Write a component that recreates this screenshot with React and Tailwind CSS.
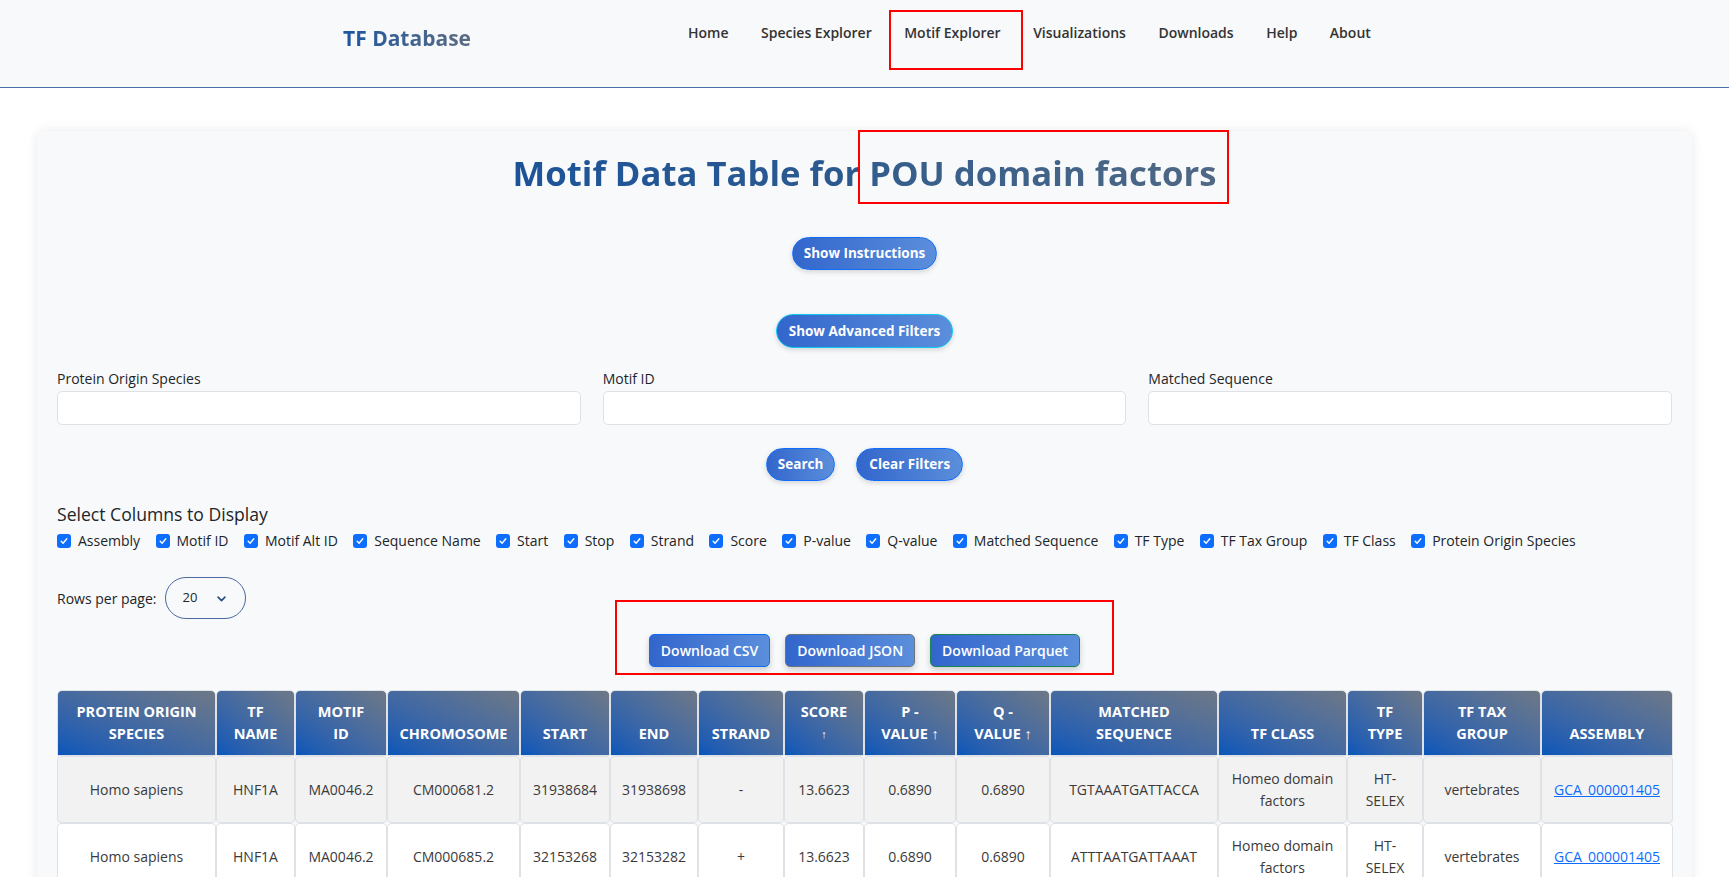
const navLinks = ["Home", "Species Explorer", "Motif Explorer", "Visualizations", "Downloads", "Help", "About"];

const columnsToShow = [
  "Assembly",
  "Motif ID",
  "Motif Alt ID",
  "Sequence Name",
  "Start",
  "Stop",
  "Strand",
  "Score",
  "P-value",
  "Q-value",
  "Matched Sequence",
  "TF Type",
  "TF Tax Group",
  "TF Class",
  "Protein Origin Species",
];

const headers = [
  { w: "w-[159px]", lines: ["Protein Origin", "Species"] },
  { w: "w-[79px]", lines: ["TF", "Name"] },
  { w: "w-[92px]", lines: ["Motif", "ID"] },
  { w: "w-[133px]", lines: ["Chromosome"] },
  { w: "w-[90px]", lines: ["Start"] },
  { w: "w-[88px]", lines: ["End"] },
  { w: "w-[86px]", lines: ["Strand"] },
  { w: "w-[80px]", lines: ["Score", "↑"] },
  { w: "w-[92px]", lines: ["P -", "Value ↑"] },
  { w: "w-[94px]", lines: ["Q -", "Value ↑"] },
  { w: "w-[168px]", lines: ["Matched", "Sequence"] },
  { w: "w-[129px]", lines: ["TF Class"] },
  { w: "w-[76px]", lines: ["TF", "Type"] },
  { w: "w-[118px]", lines: ["TF Tax", "Group"] },
  { w: "w-[132px]", lines: ["Assembly"] },
];

const rows = [
  ["Homo sapiens", "HNF1A", "MA0046.2", "CM000681.2", "31938684", "31938698", "-", "13.6623", "0.6890", "0.6890", "TGTAAATGATTACCA"],
  ["Homo sapiens", "HNF1A", "MA0046.2", "CM000685.2", "32153268", "32153282", "+", "13.6623", "0.6890", "0.6890", "ATTTAATGATTAAAT"],
  ["Homo sapiens", "HNF1A", "MA0046.2", "CM000668.2", "45210917", "45210931", "+", "13.6623", "0.6890", "0.6890", "GTTAAATGATTAACA"],
];

const Checkbox = () => (
  <span className="flex h-[14px] w-[14px] items-center justify-center rounded-[3px] bg-[#0d6efd]">
    <svg viewBox="0 0 16 16" className="h-[10px] w-[10px]" fill="none">
      <path d="M3.5 8.5l3 3 6-7" stroke="white" strokeWidth="2.2" strokeLinecap="round" strokeLinejoin="round" />
    </svg>
  </span>
);

const pill =
  "rounded-full bg-gradient-to-r from-[#3366cc] to-[#5b8edb] text-[13.5px] font-bold text-white shadow-[0_2px_5px_rgba(0,0,0,0.15)]";

const dl =
  "h-[33px] rounded-[5px] bg-gradient-to-r from-[#3366cc] to-[#5b8edb] px-[11px] text-[14px] font-semibold text-white shadow-[0_3px_6px_rgba(0,0,0,0.18)]";

const cell = "rounded-[4px] border border-[#dee2e6] px-[6px] py-[10.5px] text-center align-middle text-[14px] leading-[22px] text-[#3a3a3a]";

export default function App() {
  return (
    <div className="min-h-screen bg-white font-['Open_Sans',sans-serif] text-[#212529]">
      <header className="h-[88px] border-b border-[#4a6fa5] bg-[#f8f9fa]">
        <div className="flex pl-[343px]">
          <div className="w-[345px] pt-[24px]">
            <span className="bg-gradient-to-r from-[#1a56a0] to-[#5b6b80] bg-clip-text text-[21px] font-bold leading-[28px] text-transparent">
              TF Database
            </span>
          </div>
          <nav className="flex gap-[32.5px] pt-[23px]">
            {navLinks.map((l) => (
              <span key={l} className="relative text-[14px] font-semibold leading-[20px] text-[#333]">
                {l}
                {l === "Motif Explorer" && (
                  <span className="absolute -bottom-[18px] -left-[15px] -right-[22px] -top-[13px] border-2 border-[#ff0000]" />
                )}
              </span>
            ))}
          </nav>
        </div>
      </header>

      <main className="px-[37px] pt-[43px]">
        <section className="rounded-lg bg-[#f8f9fa] px-5 pb-10 pt-[18px] shadow-[0_0_12px_rgba(0,0,0,0.09)]">
          <h1 className="text-center text-[34.7px] font-bold leading-[48px]">
            <span className="bg-gradient-to-r from-[#1c5398] to-[#2d5a8e] bg-clip-text text-transparent">Motif Data Table for </span>
            <span className="relative">
              <span className="bg-gradient-to-r from-[#335d8c] to-[#4f6884] bg-clip-text text-transparent">POU domain factors</span>
              <span className="absolute -bottom-[8px] -left-[11px] -right-[13px] -top-[19px] border-2 border-[#ff0000]" />
            </span>
          </h1>

          <div className="mt-[40px] flex justify-center">
            <button className={`${pill} h-[33px] border border-[#0d6efd] px-[11px]`}>Show Instructions</button>
          </div>
          <div className="mt-[44px] flex justify-center">
            <button className={`${pill} h-[34px] border border-[#0dcaf0] px-[12px]`}>Show Advanced Filters</button>
          </div>

          <div className="mt-[21px] grid grid-cols-3 gap-[22px]">
            {["Protein Origin Species", "Motif ID", "Matched Sequence"].map((f) => (
              <label key={f} className="flex flex-col">
                <span className="mb-[2px] text-[14px] leading-[20px] text-[#212529]">{f}</span>
                <input className="h-[34px] rounded-[5px] border border-[#dee2e6] bg-white px-3 text-[14px]" />
              </label>
            ))}
          </div>

          <div className="mt-[23px] flex justify-center gap-[21px]">
            <button className={`${pill} h-[33px] border border-[#0d6efd] px-[11px]`}>Search</button>
            <button className={`${pill} h-[33px] border border-[#0d6efd] px-[12px]`}>Clear Filters</button>
          </div>

          <h2 className="mt-[21px] text-[17.6px] font-medium leading-[24px] text-[#212529]">Select Columns to Display</h2>
          <div className="mt-[5px] flex flex-wrap">
            {columnsToShow.map((c) => (
              <span key={c} className="mr-[15.4px] flex items-center gap-[7px] text-[14px] leading-[20px]">
                <Checkbox />
                {c}
              </span>
            ))}
          </div>

          <div className="mt-[26px] flex items-center gap-[8px]">
            <span className="text-[14px]">Rows per page:</span>
            <div className="flex h-[42px] w-[81px] items-center justify-between rounded-full border border-[#4a6aa0] pl-[17px] pr-[18px]">
              <span className="text-[13px]">20</span>
              <svg viewBox="0 0 16 16" className="h-[11px] w-[11px]" fill="none">
                <path d="M3 6l5 5 5-5" stroke="#2d4b7d" strokeWidth="2.4" strokeLinecap="round" strokeLinejoin="round" />
              </svg>
            </div>
          </div>

          <div className="mt-[15px] flex justify-center">
            <div className="relative flex gap-[15px]">
              <span className="pointer-events-none absolute -bottom-[8px] -left-[34px] -right-[34px] -top-[34px] border-2 border-[#ff0000]" />
              <button className={`${dl} border border-[#0d6efd]`}>Download CSV</button>
              <button className={`${dl} border border-[#6c757d]`}>Download JSON</button>
              <button className={`${dl} border border-[#198754]`}>Download Parquet</button>
            </div>
          </div>

          <table className="mt-[23px] w-[1616px] table-fixed border-separate border-spacing-0">
            <thead>
              <tr>
                {headers.map((h, i) => (
                  <th
                    key={i}
                    className={`${h.w} rounded-t-[5px] border border-[#dee2e6] bg-gradient-to-tr from-[#0656b9] to-[#6e7886] px-[4px] py-[10px] align-bottom text-[14.5px] font-bold uppercase leading-[22px] text-white`}
                  >
                    {h.lines.map((ln, j) => (
                      <div key={j} className={ln === "↑" ? "text-[11px]" : ""}>
                        {ln}
                      </div>
                    ))}
                  </th>
                ))}
              </tr>
            </thead>
            <tbody>
              {rows.map((r, i) => (
                <tr key={i} className={i % 2 === 0 ? "bg-[#f2f2f2]" : "bg-white"}>
                  {r.map((v, j) => (
                    <td key={j} className={cell}>
                      {v}
                    </td>
                  ))}
                  <td className={cell}>
                    Homeo domain
                    <br />
                    factors
                  </td>
                  <td className={cell}>
                    HT-
                    <br />
                    SELEX
                  </td>
                  <td className={cell}>vertebrates</td>
                  <td className={cell}>
                    <a className="text-[#0d6efd] underline">GCA_000001405</a>
                  </td>
                </tr>
              ))}
            </tbody>
          </table>
        </section>
      </main>
    </div>
  );
}
